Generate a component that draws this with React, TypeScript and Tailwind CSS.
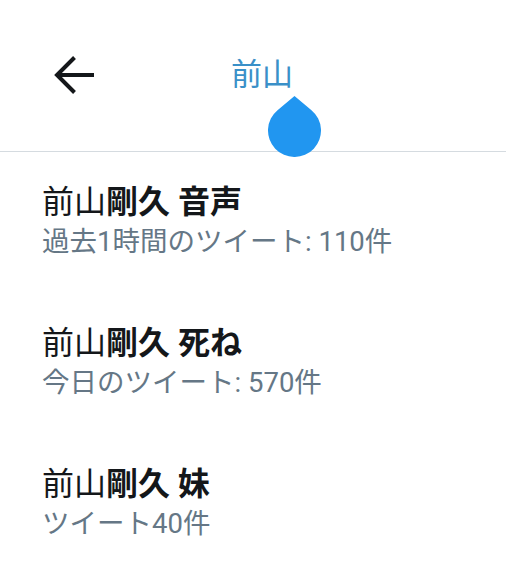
const items = [
  { rest: "剛久 音声", sub: "過去1時間のツイート: 110件" },
  { rest: "剛久 死ね", sub: "今日のツイート: 570件" },
  { rest: "剛久 妹", sub: "ツイート40件" },
];

export default function App() {
  return (
    <div
      className="w-[506px] h-[574px] bg-white overflow-hidden"
      style={{ fontFamily: 'Roboto, "Noto Sans CJK JP", sans-serif' }}
    >
      {/* header */}
      <div className="relative h-[152px] border-b border-[#d5dbe0]">
        <div className="flex items-center h-[150px]">
          <svg
            className="ml-[53px]"
            width="42"
            height="40"
            viewBox="0 0 42 40"
            fill="none"
            stroke="#14171a"
            strokeWidth="4"
          >
            <path d="M41 20H4" />
            <path d="M21.5 2.5L4 20l17.5 17.5" />
          </svg>
          <span className="ml-[136px] text-[31px] leading-[40px] text-[#3a90c8]">前山</span>
        </div>
        {/* text selection handle */}
        <svg
          className="absolute left-[268px] top-[96px]"
          width="53"
          height="61"
          viewBox="0 0 53 61"
        >
          <path d="M26.5 0L43.47 14.15A26.5 26.5 0 1 1 9.53 14.15Z" fill="#2196f0" />
        </svg>
      </div>

      {/* list */}
      <div className="flex flex-col">
        {items.map((it, i) => (
          <div key={i} className="h-[141px] px-[42px] pt-[30px]">
            <div className="text-[32px] leading-[40px] text-[#14171a]">
              前山<span className="font-bold">{it.rest}</span>
            </div>
            <div className="text-[27.5px] leading-[40px] text-[#657786]">{it.sub}</div>
          </div>
        ))}
      </div>
    </div>
  );
}
